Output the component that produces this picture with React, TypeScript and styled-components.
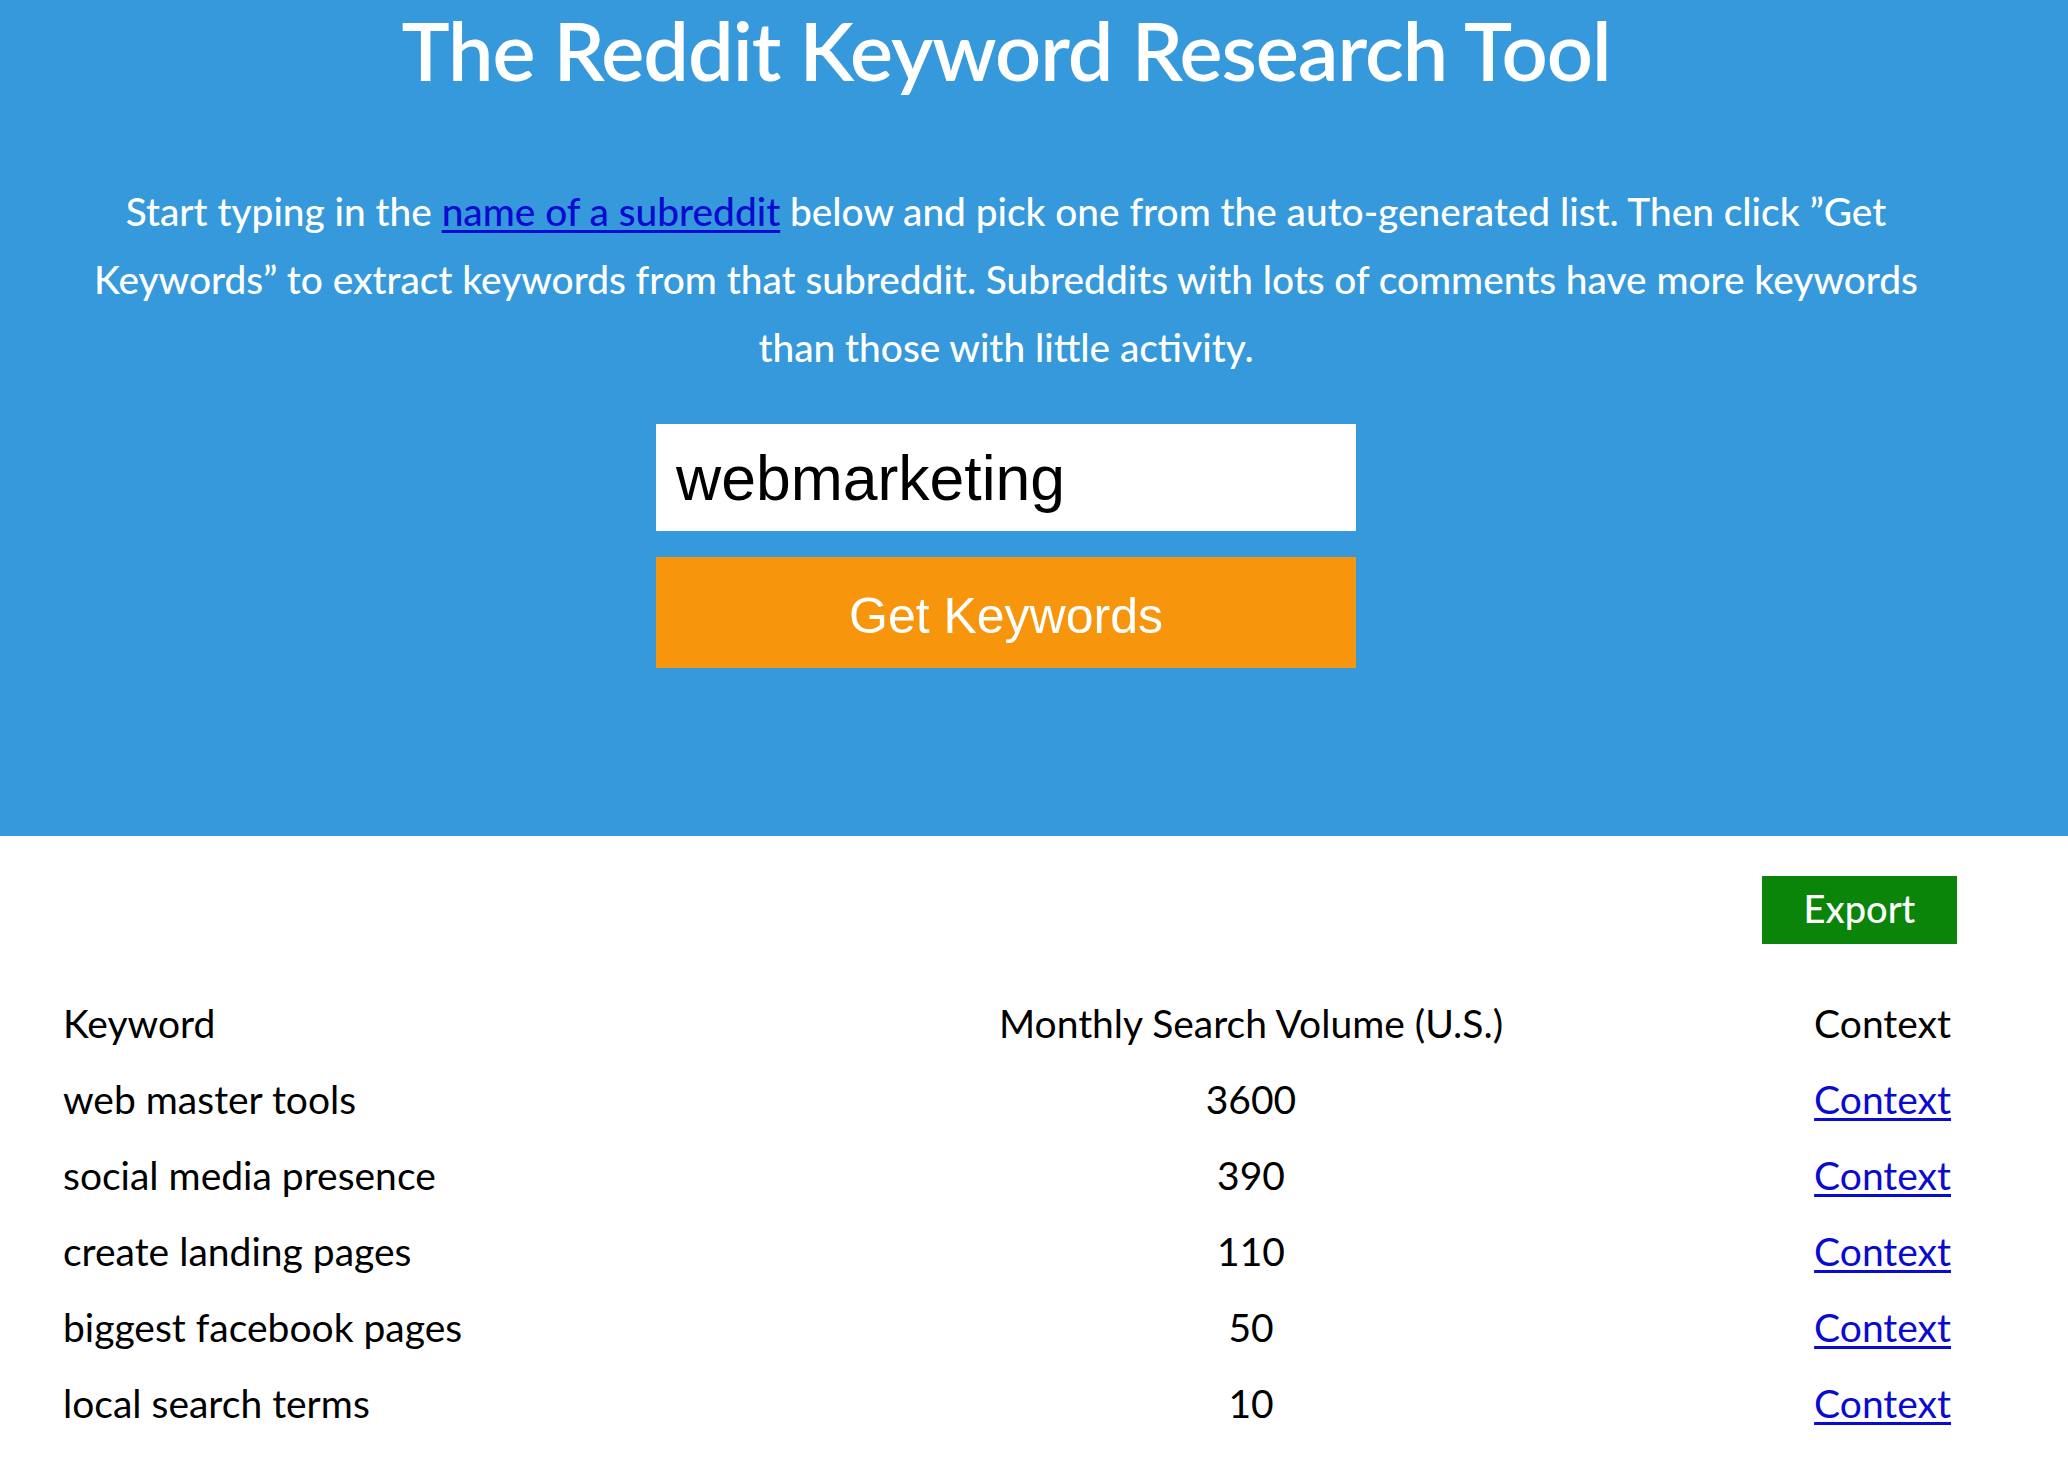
import React from "react";
import styled, { createGlobalStyle } from "styled-components";

const GlobalStyle = createGlobalStyle`
  html, body { margin: 0; padding: 0; background: #ffffff; }
  body { font-family: Lato, "Open Sans", sans-serif; color: #000; }
  * { box-sizing: border-box; }
`;

const Hero = styled.section`
  background: #3599db;
  height: 836px;
  overflow: hidden;
`;

const Container = styled.div`
  width: 1900px;
  margin-left: 56px;
`;

const HeroInner = styled(Container)`
  display: flex;
  flex-direction: column;
  align-items: center;
  padding-top: 1px;
`;

const Title = styled.h1`
  margin: 0;
  font-family: Lato, sans-serif;
  font-weight: 600;
  font-size: 81px;
  line-height: 1.2;
  color: #ffffff;
  letter-spacing: -1px;
`;

const Intro = styled.p`
  margin: 79px 0 0;
  font-family: Lato, sans-serif;
  font-weight: 500;
  font-size: 38.8px;
  line-height: 68px;
  color: #ffffff;
  text-align: center;
  white-space: nowrap;
`;

const InlineLink = styled.a`
  color: #0a0ad0;
  text-decoration: underline;
  text-underline-offset: 4px;
`;

const SearchForm = styled.form`
  margin-top: 43px;
  width: 700px;
  display: flex;
  flex-direction: column;
  gap: 26px;
`;

const SearchInput = styled.input`
  width: 100%;
  height: 107px;
  border: none;
  outline: none;
  background: #ffffff;
  padding: 0 20px;
  font-family: "Liberation Sans", Arial, sans-serif;
  font-size: 62.5px;
  color: #000;
`;

const SubmitButton = styled.button`
  width: 100%;
  height: 111px;
  border: none;
  background: #f7950c;
  color: #ffffff;
  padding: 6px 0 0;
  font-family: "Liberation Sans", Arial, sans-serif;
  font-size: 50px;
  cursor: pointer;
`;

const Results = styled(Container)`
  padding-top: 40px;
  display: flex;
  flex-direction: column;
`;

const Toolbar = styled.div`
  display: flex;
  justify-content: flex-end;
`;

const ExportButton = styled.button`
  width: 195px;
  height: 68px;
  border: none;
  background: #0a850a;
  color: #ffffff;
  padding: 0 0 4px;
  font-family: Lato, sans-serif;
  font-size: 38px;
  font-weight: 500;
  cursor: pointer;
  margin-right: -1px;
`;

const Table = styled.div`
  margin-top: 41px;
  display: grid;
  grid-template-columns: 1fr 720px 346px;
`;

const Cell = styled.div<{ $align: "left" | "center" | "right" }>`
  height: 76px;
  display: flex;
  align-items: center;
  justify-content: ${(p) =>
    p.$align === "left" ? "flex-start" : p.$align === "center" ? "center" : "flex-end"};
  padding: 0 5px 0 7px;
  font-family: Lato, sans-serif;
  font-size: 39px;
  font-weight: 400;
  color: #000;
`;

const ContextLink = styled.a`
  color: #0a0ad0;
  text-decoration: underline;
  text-underline-offset: 4px;
`;

const rows = [
  { keyword: "web master tools", volume: "3600" },
  { keyword: "social media presence", volume: "390" },
  { keyword: "create landing pages", volume: "110" },
  { keyword: "biggest facebook pages", volume: "50" },
  { keyword: "local search terms", volume: "10" },
];

export default function App() {
  return (
    <>
      <GlobalStyle />
      <Hero>
        <HeroInner>
          <Title>The Reddit Keyword Research Tool</Title>
          <Intro>
            Start typing in the <InlineLink href="#">name of a subreddit</InlineLink> below and pick
            one from the auto-generated list. Then click ”Get
            <br />
            Keywords” to extract keywords from that subreddit. Subreddits with lots of comments have
            more keywords
            <br />
            than those with little activity.
          </Intro>
          <SearchForm onSubmit={(e) => e.preventDefault()}>
            <SearchInput defaultValue="webmarketing" />
            <SubmitButton type="submit">Get Keywords</SubmitButton>
          </SearchForm>
        </HeroInner>
      </Hero>
      <Results>
        <Toolbar>
          <ExportButton>Export</ExportButton>
        </Toolbar>
        <Table>
          <Cell $align="left">Keyword</Cell>
          <Cell $align="center">Monthly Search Volume (U.S.)</Cell>
          <Cell $align="right">Context</Cell>
          {rows.map((r) => (
            <React.Fragment key={r.keyword}>
              <Cell $align="left">{r.keyword}</Cell>
              <Cell $align="center">{r.volume}</Cell>
              <Cell $align="right">
                <ContextLink href="#">Context</ContextLink>
              </Cell>
            </React.Fragment>
          ))}
        </Table>
      </Results>
    </>
  );
}
